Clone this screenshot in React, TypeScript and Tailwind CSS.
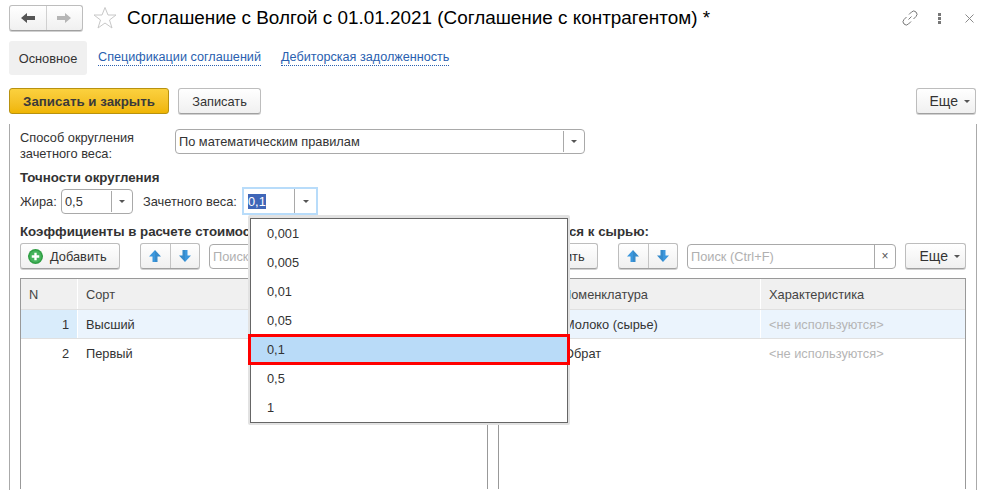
import { ReactNode } from 'react'

function Caret() {
  return <span className="inline-block border-x-[3px] border-t-[3px] border-x-transparent border-t-[#555]" />
}

function Button({ children, className = '' }: { children: ReactNode; className?: string }) {
  return (
    <div
      className={`flex h-[26px] items-center justify-center rounded-[3px] border border-[#bdbdbd] border-b-[#a0a0a0] bg-gradient-to-b from-white to-[#f0f0f0] text-[#333] shadow-[0_1px_0_#d0d0d0] ${className}`}
    >
      {children}
    </div>
  )
}

function MoreButton({ className = '' }: { className?: string }) {
  return (
    <Button className={`justify-end gap-[6px] pr-[5px] text-[14px] ${className}`}>
      Еще <Caret />
    </Button>
  )
}

function ComboBox({ value, className }: { value: string; className: string }) {
  return (
    <div className={`flex h-[25px] items-stretch rounded-[4px] border border-[#a9a9a9] bg-white text-[#333] ${className}`}>
      <div className="flex min-w-0 flex-1 items-center pl-[3px]">{value}</div>
      <div className="my-px flex w-[21px] items-center justify-center border-l border-[#a9a9a9]">
        <Caret />
      </div>
    </div>
  )
}

function Arrow({ down = false, color = '#3b97dd' }: { down?: boolean; color?: string }) {
  return (
    <svg width="14" height="14" viewBox="0 0 14 14" className={down ? 'rotate-180' : ''}>
      <path d="M7 1 13 7.5H9.5V13h-5V7.5H1Z" fill={color} />
      <path d="M7 1 13 7.5H9.5V13H7Z" fill="#000" opacity="0.08" />
    </svg>
  )
}

function MoveButtons() {
  return (
    <Button className="ml-[20px] w-[60px]">
      <div className="flex flex-1 justify-center">
        <Arrow />
      </div>
      <div className="h-full w-px bg-[#c4c4c4]" />
      <div className="flex flex-1 justify-center">
        <Arrow down />
      </div>
    </Button>
  )
}

function AddButton() {
  return (
    <Button className="w-[100px] justify-start pl-[7px]">
      <svg width="15" height="15" viewBox="0 0 14 14">
        <circle cx="7" cy="7" r="7" fill="#2f9e44" />
        <circle cx="7" cy="7" r="5.6" fill="#45b35c" />
        <path d="M3.500 7h7M7 3.500v7" stroke="#fff" strokeWidth="2.2" />
      </svg>
      <span className="ml-[7px]">Добавить</span>
    </Button>
  )
}

function SearchBox() {
  return (
    <div className="ml-[9px] flex h-[25px] w-[209px] rounded-[4px] border border-[#a9a9a9] bg-white">
      <div className="flex flex-1 items-center whitespace-nowrap pl-[3px] text-[#b0b0b0]">Поиск (Ctrl+F)</div>
      <div className="flex w-[21px] items-center justify-center border-l border-[#a9a9a9] text-[12px] text-[#555]">×</div>
    </div>
  )
}

function Toolbar() {
  return (
    <div className="mt-[4px] flex items-center">
      <AddButton />
      <MoveButtons />
      <SearchBox />
      <MoreButton className="ml-[9px] w-[61px]" />
    </div>
  )
}

function Table({ columns, rows, head }: { columns: string; rows: ReactNode[][]; head: ReactNode[] }) {
  return (
    <div className="mt-[9px] h-[211px] border-x border-t border-[#999]">
      <div className={`grid h-[30px] gap-x-px ${columns}`}>
        {head.map((cell, i) => (
          <div key={i} className="flex items-center bg-[#f0f0f0] pl-[8px] text-[#444]">
            {cell}
          </div>
        ))}
      </div>
      {rows.map((row, r) => (
        <div key={r} className={`grid h-[29px] gap-x-px border-t border-[#e0e0e0] ${columns}`}>
          {row.map((cell, i) => (
            <div key={i} className={`flex items-center ${r === 0 ? 'bg-[#ebf4fd]' : ''}`}>
              {cell}
            </div>
          ))}
        </div>
      ))}
    </div>
  )
}

const options = ['0,001', '0,005', '0,01', '0,05', '0,1', '0,5', '1']

function Dropdown() {
  return (
    <div className="absolute left-[248px] top-[215px] z-10 w-[322px] rounded-[2px] bg-[#e2e2e2] p-[2px] pt-[3px]">
      <div className="relative h-[205px] border border-[#666] bg-white">
        {options.map(o => (
          <div key={o} className={`flex h-[29px] items-center pl-[16px] text-[#333] ${o === '0,1' ? 'bg-[#b9dbf8]' : ''}`}>
            {o}
          </div>
        ))}
        <div className="absolute -inset-x-[3px] top-[115px] h-[31px] border-[3px] border-[#ff0000]" />
      </div>
    </div>
  )
}

export default function App() {
  return (
    <div className="relative h-[500px] w-[983px] overflow-hidden bg-white font-['Liberation_Sans',Arial,sans-serif] text-[12.8px] leading-[15px] text-[#333]">
      {/* Title bar */}
      <header className="mt-[6px] flex h-[24px] items-center pl-[9px]">
        <Button className="h-[24px] w-[74px]">
          <div className="flex flex-1 justify-center">
            <svg width="16" height="12" viewBox="0 0 16 12"><path d="M1 6 7 1v3h8v4H7v3Z" fill="#555" /></svg>
          </div>
          <div className="h-full w-px bg-[#d0d0d0]" />
          <div className="flex flex-1 justify-center">
            <svg width="16" height="12" viewBox="0 0 16 12"><path d="M15 6 9 1v3H1v4h8v3Z" fill="#b5b5b5" /></svg>
          </div>
        </Button>
        <svg width="24" height="24" viewBox="0 0 24 24" className="ml-[10px]">
          <path d="M12 1.500 15 9h8l-6.500 5 2.500 8-7-5-7 5 2.500-8L1 9h8Z" fill="#fff" stroke="#c8c8c8" />
        </svg>
        <h1 className="ml-[10px] text-[18.9px] font-normal leading-[24px] text-black">
          Соглашение с Волгой с 01.01.2021 (Соглашение с контрагентом) *
        </h1>
        <div className="ml-auto flex items-center pr-[9px]">
          <svg width="16" height="16" viewBox="0 0 16 16" fill="none" stroke="#777">
            <path d="M6.500 9.500 9.500 6.500" />
            <path d="M7 4.500 9.500 2a3 3 0 0 1 4.500 4.500L11.500 9" />
            <path d="M9 11.500 6.500 14A3 3 0 0 1 2 9.500L4.500 7" />
          </svg>
          <div className="ml-[20px] flex flex-col gap-[1px]">
            <span className="h-[3px] w-[3px] bg-[#777]" />
            <span className="h-[3px] w-[3px] bg-[#777]" />
            <span className="h-[3px] w-[3px] bg-[#777]" />
          </div>
          <svg width="9" height="9" viewBox="0 0 9 9" className="ml-[24px]" stroke="#8a8a8a">
            <path d="M.5.5l8 8M8.500.5l-8 8" />
          </svg>
        </div>
      </header>

      {/* Tabs */}
      <nav className="ml-[9px] mt-[11px] flex h-[34px] items-center text-[12.65px]">
        <div className="flex h-full w-[78px] items-center justify-center rounded-[3px] bg-[#f0f0f0] text-[12.8px]">Основное</div>
        <a className="ml-[11px] border-b border-dotted border-[#2a5fb0] text-[#2a5fb0]">Спецификации соглашений</a>
        <a className="ml-[20px] border-b border-dotted border-[#2a5fb0] text-[#2a5fb0]">Дебиторская задолженность</a>
      </nav>

      {/* Command bar */}
      <div className="ml-[9px] mr-[7px] mt-[13px] flex">
        <div className="flex h-[26px] w-[160px] items-center justify-center rounded-[3px] border border-[#b8920f] bg-gradient-to-b from-[#fbd13e] to-[#efb500] text-[13.3px] font-bold text-[#3a3a3a]">
          Записать и закрыть
        </div>
        <Button className="ml-[9px] w-[83px]">Записать</Button>
        <MoreButton className="ml-auto w-[60px]" />
      </div>

      {/* Form */}
      <main className="ml-[9px] mt-[10px] h-[366px] w-[968px] border-x border-[#aaa] px-[10px] pt-[5px]">
        <div className="flex">
          <div className="mt-px w-[155px] leading-[16px]">
            Способ округления
            <br />
            зачетного веса:
          </div>
          <ComboBox value="По математическим правилам" className="w-[410px]" />
        </div>

        <div className="mt-[8px] text-[13.3px] font-bold">Точности округления</div>

        <div className="mt-[2px] flex h-[28px] items-center">
          <span className="w-[36px]">Жира:</span>
          <ComboBox value="0,5" className="ml-[5px] w-[72px]" />
          <span className="ml-[10px] w-[95px] whitespace-nowrap">Зачетного веса:</span>
          <div className="ml-[4px] flex h-[28px] w-[76px] items-center border-2 border-[#b8dcfa]">
            <div className="flex-1 pl-[4px]">
              <span className="bg-[#3f66b8] text-white">0,1</span>
            </div>
            <div className="my-px flex h-[24px] w-[22px] items-center justify-center border-l border-[#a9a9a9]">
              <Caret />
            </div>
          </div>
        </div>

        <div className="mt-[9px] grid grid-cols-2 gap-x-[10px]">
          <section className="min-w-0">
            <div className="whitespace-nowrap text-[13.3px] font-bold">Коэффициенты в расчете стоимости</div>
            <Toolbar />
            <Table
              columns="grid-cols-[56px_1fr]"
              head={['N', 'Сорт']}
              rows={[
                [<div className="flex h-full w-full items-center justify-end bg-[#d9ecfb] pr-[8px]">1</div>, <span className="pl-[8px]">Высший</span>],
                [<div className="w-full pr-[8px] text-right">2</div>, <span className="pl-[8px]">Первый</span>],
              ]}
            />
          </section>
          <section className="min-w-0">
            <div className="flex w-[151px] justify-end whitespace-nowrap text-[13.3px] font-bold">
              <span className="shrink-0">Номенклатура относится к сырью:</span>
            </div>
            <Toolbar />
            <Table
              columns="grid-cols-[261px_1fr]"
              head={[<span className="pl-[55px]">Номенклатура</span>, 'Характеристика']}
              rows={[
                [<span className="pl-[65px]">Молоко (сырье)</span>, <span className="pl-[8px] text-[#b5b5b5]">&lt;не используются&gt;</span>],
                [<span className="pl-[65px]">Обрат</span>, <span className="pl-[8px] text-[#b5b5b5]">&lt;не используются&gt;</span>],
              ]}
            />
          </section>
        </div>
      </main>

      <Dropdown />
    </div>
  )
}
